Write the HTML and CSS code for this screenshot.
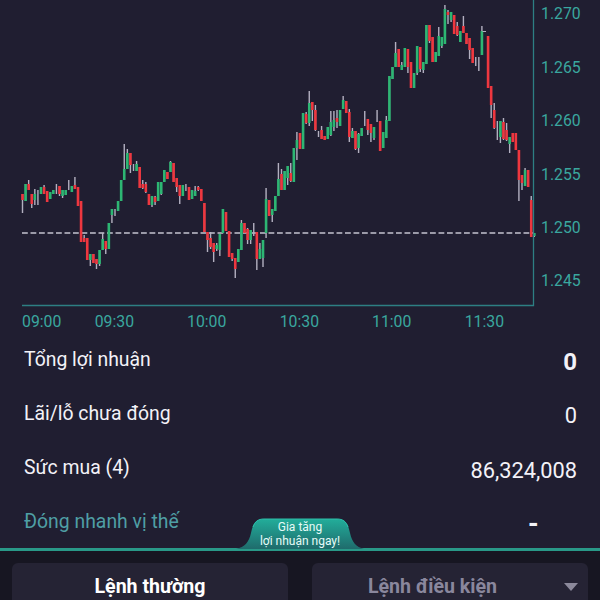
FILE: index.html
```html
<!DOCTYPE html>
<html lang="vi">
<head>
<meta charset="utf-8">
<title>Phái sinh</title>
<link rel="stylesheet" href="styles.css">
</head>
<body>
<main class="screen">
  <svg class="chart" viewBox="0 0 600 336" width="600" height="336">
    <path class="last-price" d="M22 233H533"/>
    <g id="candles"></g>
    <path class="axis" d="M533.5 0V305.5H22"/>
    <g class="tick">
      <text x="541" y="19">1.270</text>
      <text x="541" y="72.5">1.265</text>
      <text x="541" y="126">1.260</text>
      <text x="541" y="179.5">1.255</text>
      <text x="541" y="232.5">1.250</text>
      <text x="541" y="286">1.245</text>
      <text x="22" y="327">09:00</text>
      <text x="94.7" y="327">09:30</text>
      <text x="187" y="327">10:00</text>
      <text x="279.7" y="327">10:30</text>
      <text x="372" y="327">11:00</text>
      <text x="464.7" y="327">11:30</text>
    </g>
  </svg>
  <section class="summary">
    <div class="row"><span class="label">Tổng lợi nhuận</span><span class="value total">0</span></div>
    <div class="row"><span class="label">Lãi/lỗ chưa đóng</span><span class="value">0</span></div>
    <div class="row"><span class="label">Sức mua (4)</span><span class="value">86,324,008</span></div>
    <div class="row"><span class="label link">Đóng nhanh vị thế</span><span class="value dash">-</span></div>
  </section>
  <footer class="orders">
    <div class="promo">
      <svg class="promo-shape" viewBox="0 0 128 32" width="128" height="32">
        <defs><linearGradient id="g" x1="0" y1="0" x2="0" y2="1"><stop offset="0" stop-color="#22ad9a"/><stop offset="1" stop-color="#1f6b6c"/></linearGradient></defs>
        <path fill="url(#g)" d="M0 31C9 29 13 24 15 15C17 5 20 1 28 1H101C109 1 112 5 114 15C116 24 120 29 128 31Z"/>
        <path class="promo-edge" d="M17 9C19 3.500 22 1 28 1H101C107 1 110 3.500 112 9"/>
      </svg>
      <div class="promo-text">Gia tăng<br>lợi nhuận ngay!</div>
    </div>
    <div class="tab active">Lệnh thường</div>
    <div class="tab">Lệnh điều kiện
      <svg class="caret" viewBox="0 0 14 8" width="14" height="8"><path d="M0 0H14L7 8Z"/></svg>
    </div>
  </footer>
</main>
<script src="chart.js"></script>
</body>
</html>
```
FILE: styles.css
```css
* { box-sizing: border-box; }
body { margin: 0; background: #201e31; color: #f3f2f8; font-family: Roboto, "Liberation Sans", sans-serif; }
.screen { width: 600px; height: 600px; overflow: hidden; display: flex; flex-direction: column; }
.chart { display: block; flex: none; }
.axis { fill: none; stroke: #2d7f83; stroke-width: 1.3; }
.last-price { stroke: #c4c3cf; stroke-width: 1.5; stroke-dasharray: 5.800 2.700; }
.tick { fill: #3aa79f; font-size: 15.8px; }
.up { fill: #2db673; }
.down { fill: #ee373f; }
.wick { fill: #b3b0c0; }
.summary { height: 212px; padding: 0 23px 0 24px; display: grid; grid-template-rows: 48px 60px 49px 58px; }
.row { display: flex; justify-content: space-between; align-items: center; }
.label { font-size: 19.400px; padding-bottom: 2px; }
.link { color: #4f9fa5; }
.value { font-size: 21.800px; padding-top: 3px; }
.total { font-size: 24px; font-weight: 700; }
.dash { font-size: 27px; font-weight: 700; width: 49px; line-height: 30px; padding-top: 4px; }
.orders { position: relative; height: 52px; flex: none; background: #171622; border-top: 3px solid #299988; display: grid; grid-template-columns: 276px 276px; column-gap: 24px; padding: 12px 12px 0; }
.tab { position: relative; height: 50px; border-radius: 6px; background: #252334; text-align: center; font-size: 19.600px; font-weight: 700; line-height: 48px; color: #8a879d; padding-right: 35px; }
.active { color: #fff; padding-right: 0; }
.caret { position: absolute; right: 10px; top: 20px; fill: #8c899b; }
.promo { position: absolute; left: 236px; top: -33px; width: 128px; height: 32px; }
.promo-shape { position: absolute; left: 0; top: 0; }
.promo-edge { fill: none; stroke: #2cc0ab; stroke-width: 1; }
.promo-text { position: relative; text-align: center; font-size: 12px; line-height: 13.500px; padding-top: 3px; color: #e6fbf7; }
```
FILE: chart.js
```js
// One candle per minute: high, low, body top, body bottom (in chart pixels), kind (g up, r down, w wick only)
const data = `194 213 194 200 r|184 201 184 201 g|180 190 184 190 r|194 208 194 204 r|189 205 194 200 g|190 205 0 0 w|187 194 187 194 g|185 194 187 194 r|191 202 191 202 r|192 199 192 199 g
190 194 190 194 g|184 194 0 0 w|186 196 186 194 r|190 198 190 196 g|190 195 190 195 g|180 190 0 0 w|186 192 186 192 g|177 189 185 189 r|187 206 187 206 r|201 242 201 242 r
235 242 238 242 r|238 260 238 260 r|254 266 254 260 g|254 263 254 263 r|259 269 259 264 r|250 266 250 264 g|233 250 239 250 g|241 254 241 249 r|223 249 223 249 g|209 223 209 215 g
209 216 0 0 w|201 211 201 211 g|180 201 180 201 g|144 180 169 180 g|149 169 153 169 g|153 173 153 165 r|164 171 0 0 w|161 171 164 171 g|167 188 167 188 r|180 189 184 188 r
182 193 184 192 r|194 205 194 205 r|196 207 196 205 g|196 205 197 202 r|182 201 182 201 g|182 195 182 194 g|170 182 170 182 g|172 179 172 179 r|161 172 162 172 g|163 182 163 182 r
178 192 178 187 r|185 204 185 196 r|185 196 185 196 g|184 191 0 0 w|187 200 187 200 r|190 199 190 199 g|186 196 191 196 g|186 191 187 190 r|189 201 189 201 r|203 232 203 232 r
232 252 232 240 r|232 249 238 247 r|243 262 243 252 r|243 251 245 249 g|234 256 234 250 g|209 233 209 233 g|212 231 212 231 r|231 257 231 257 r|253 261 253 259 r|258 278 258 269 r
249 262 249 262 g|220 250 223 250 g|223 233 223 233 r|228 244 229 240 r|230 244 230 240 g|223 236 0 0 w|232 270 232 259 r|243 259 249 259 g|240 267 240 258 g|188 238 199 233 g
200 216 200 216 r|209 222 209 215 g|196 211 196 211 g|163 196 179 196 g|169 190 174 190 r|171 190 171 190 g|166 185 166 178 g|163 182 173 181 r|148 182 148 182 g|132 160 140 148 g
133 149 133 149 r|113 149 113 149 g|112 124 114 123 r|91 126 103 123 g|102 121 102 110 r|105 131 110 130 r|131 137 0 0 w|126 139 130 139 r|136 140 136 140 r|127 139 127 139 g
111 136 122 135 g|111 131 120 127 g|110 128 118 122 r|110 126 110 126 g|96 109 100 109 g|101 113 101 113 r|109 142 112 137 r|128 138 131 138 g|131 150 131 149 r|133 153 134 148 g
128 136 128 136 g|111 126 0 0 w|119 135 119 130 r|124 142 124 133 r|127 140 127 138 g|110 122 0 0 w|121 151 121 151 r|132 148 132 148 g|116 138 120 138 g|76 121 76 121 g
67 79 67 79 g|42 67 53 67 g|49 67 49 67 r|62 70 65 70 g|48 67 48 67 g|49 73 49 67 r|62 88 62 88 r|73 88 73 88 g|46 75 46 73 g|47 72 47 69 r
62 73 62 70 g|25 64 25 64 g|25 43 25 41 r|37 62 37 62 r|52 62 52 62 g|27 56 36 56 g|37 48 37 46 g|5 44 9 44 g|10 24 12 15 r|12 22 12 20 g
15 34 15 34 r|22 36 26 35 r|31 42 31 42 g|16 33 26 33 r|33 44 33 44 r|38 59 38 50 r|48 63 48 63 r|57 66 0 0 w|57 71 0 0 w|26 55 31 55 g
31 32 0 0 w|36 88 36 88 r|86 118 86 105 r|103 129 110 128 r|121 140 0 0 w|121 143 121 137 g|118 140 122 139 r|123 141 130 140 r|137 153 137 144 g|133 142 133 142 r
133 150 133 150 r|150 201 150 180 r|175 190 175 183 r|168 186 170 186 g|170 187 170 187 r|196 237 200 237 r|233 237 233 236 g`;
const rect = (cls, x, y, w, h) => `<rect class="${cls}" x="${x.toFixed(2)}" y="${y}" width="${w}" height="${h}"/>`;
document.getElementById('candles').innerHTML = data.split(/[|\n]/).map((row, i) => {
  const [high, low, top, bottom, kind] = row.split(' ');
  const x = 22.5 + i * 3.0833;
  const wick = rect('wick', x - 0.7, +high, 1.4, low - high);
  const body = kind === 'w' ? '' : rect(kind === 'g' ? 'up' : 'down', x - 1.3, +top, 2.6, bottom - top);
  return wick + body;
}).join('') + rect('wick', 482.5, 31, 3.5, 1);
```
